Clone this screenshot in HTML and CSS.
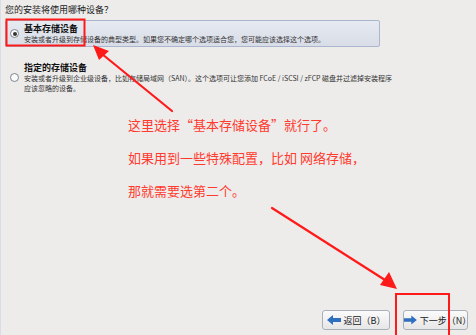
FILE: index.html
```html
<!DOCTYPE html>
<html lang="zh-CN">
<head>
  <meta charset="UTF-8" />
  <title>存储设备</title>
  <link rel="stylesheet" href="styles.css">
</head>
<body>
  <div class="page">
    <div class="question">您的安装将使用哪种设备？</div>

    <div class="option selected">
      <span class="radio checked"></span>
      <div class="option-text">
        <div class="option-title">基本存储设备</div>
        <div class="option-desc">安装或者升级到存储设备的典型类型。如果您不确定哪个选项适合您，您可能应该选择这个选项。</div>
      </div>
    </div>

    <div class="option">
      <span class="radio"></span>
      <div class="option-text">
        <div class="option-title">指定的存储设备</div>
        <div class="option-desc">安装或者升级到企业级设备，比如存储局域网（SAN）。这个选项可让您添加 FCoE / iSCSI / zFCP 磁盘并过滤掉安装程序<br>应该忽略的设备。</div>
      </div>
    </div>

    <div class="note">
      <p>这里选择“基本存储设备”就行了。</p>
      <p>如果用到一些特殊配置，比如 网络存储，</p>
      <p>那就需要选第二个。</p>
    </div>

    <div class="actions">
      <button class="btn btn-back">
        <svg width="14" height="10" viewBox="0 0 14 10"><path d="M0 5 L6 0 L6 3 L14 3 L14 7 L6 7 L6 10 Z" fill="#2f6fbf"/></svg>
        返回（B）
      </button>
      <button class="btn btn-next">
        <svg width="14" height="10" viewBox="0 0 14 10"><path d="M14 5 L8 0 L8 3 L0 3 L0 7 L8 7 L8 10 Z" fill="#2f6fbf"/></svg>
        下一步（N）
      </button>
    </div>
  </div>

  <svg class="marks" width="476" height="335" viewBox="0 0 476 335">
    <rect x="5.5" y="19.5" width="78" height="26" fill="none" stroke="#ff1a1a" stroke-width="2"/>
    <rect x="395" y="294" width="53" height="42" fill="none" stroke="#ff1a1a" stroke-width="2"/>
    <path d="M171 111 L101 54" stroke="#ff1a1a" stroke-width="2.2" stroke-linecap="round"/>
    <path d="M92 45 L108 51 L98 60 Z" fill="#ff1a1a"/>
    <path d="M271 208 L384 280" stroke="#ff1a1a" stroke-width="2.2" stroke-linecap="round"/>
    <path d="M396 289 L379 285 L388 272 Z" fill="#ff1a1a"/>
  </svg>
</body>
</html>
```

FILE: styles.css
```css
* { box-sizing: border-box; }

body {
  margin: 0;
  width: 476px;
  height: 335px;
  overflow: hidden;
  position: relative;
  background: #edeceb;
  font-family: "Noto Sans CJK SC", "DejaVu Sans", sans-serif;
  color: #222;
  border-left: 1px solid #d8dde6;
}

.page {
  height: 100%;
  display: flex;
  flex-direction: column;
  padding: 4px 0 0 4px;
}

.question {
  font-size: 9px;
  line-height: 12px;
  margin-bottom: 4px;
}

.option {
  display: flex;
  align-items: center;
  gap: 5px;
  padding: 2px 4px 2px 4px;
  width: 375px;
  border: 1px solid transparent;
  margin-bottom: 6px;
}

.option.selected {
  background: linear-gradient(#e6e9f0, #d8dde7);
  border-color: #a9b6cd;
  border-radius: 2px;
  margin-bottom: 12px;
}

.option-title {
  font-size: 9px;
  line-height: 11px;
  font-weight: bold;
  color: #111;
}

.option-desc {
  font-size: 7px;
  line-height: 10px;
  color: #333;
  white-space: nowrap;
}

.radio {
  width: 9px;
  height: 9px;
  border-radius: 50%;
  border: 1px solid #7d848f;
  background: #fafafa;
  flex: none;
  display: flex;
  align-items: center;
  justify-content: center;
}

.radio.checked::after {
  content: "";
  width: 4px;
  height: 4px;
  border-radius: 50%;
  background: #333;
}

.note {
  margin: 15px 0 0 123px;
  color: #ff3a2e;
  font-size: 13px;
  line-height: 16px;
}

.note p {
  margin: 0 0 17px 0;
}

.actions {
  margin-top: auto;
  display: flex;
  justify-content: flex-end;
  gap: 13px;
  padding: 0 8px 5px 0;
}

.btn {
  display: flex;
  align-items: center;
  justify-content: center;
  gap: 3px;
  height: 20px;
  padding: 0;
  font-family: inherit;
  font-size: 9px;
  color: #222;
  background: linear-gradient(#fbfbfb, #e6e6e6);
  border: 1px solid #aab0ba;
  border-radius: 3px;
}

.btn-back { width: 68px; }
.btn-next { width: 65px; }

.marks {
  position: absolute;
  top: 0;
  left: 0;
  pointer-events: none;
}
```
